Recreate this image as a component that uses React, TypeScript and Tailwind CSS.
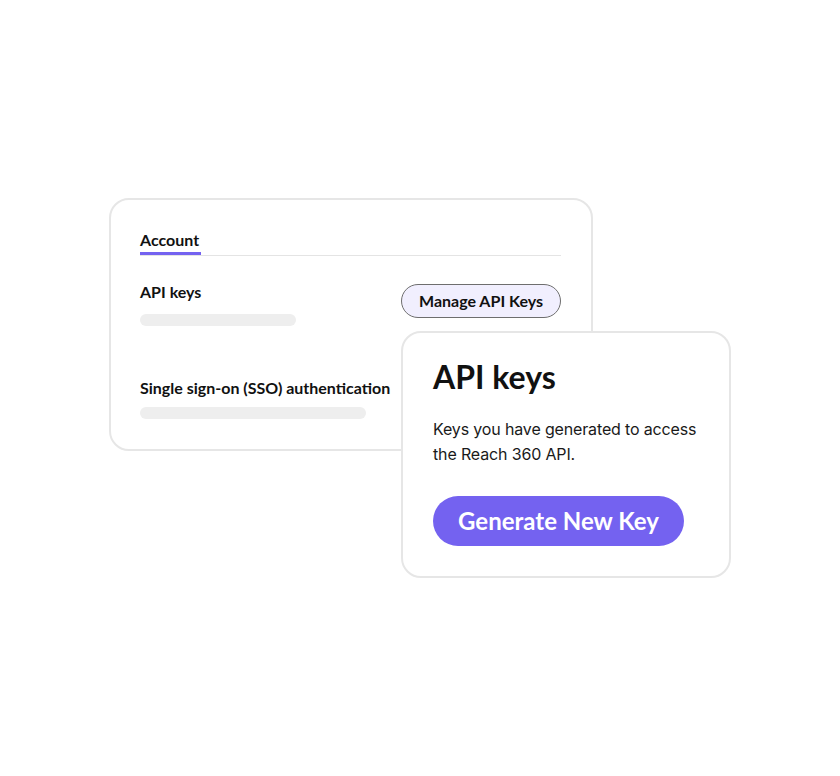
import React from "react";

export default function App() {
  return (
    <div className="w-[840px] h-[776px] bg-white relative" style={{ fontFamily: "Lato, 'Noto Sans', sans-serif" }}>
      <div className="absolute left-[109px] top-[198px] w-[484px] h-[253px] border-2 border-[#e6e6e6] rounded-[20px] bg-white pl-[29px] pr-[30px] pt-[30px] text-[#111]">
        <div className="flex border-b border-[#e4e4e4] h-[26px]">
          <span className="text-[16px] leading-[20px] font-bold border-b-[3px] border-[#7462f0] h-[25px] inline-block pr-[2px]">Account</span>
        </div>
        <div className="flex justify-between items-start mt-[26px]">
          <div className="flex flex-col">
            <span className="text-[16px] leading-[20px] font-bold">API keys</span>
            <div className="mt-[12px] w-[156px] h-[12px] rounded-full bg-[#eeeeee]" />
          </div>
          <div className="mt-[2px] w-[160px] h-[34px] rounded-full border border-[#6e6e6e] bg-[#f1effe] flex items-center justify-center text-[16px] font-bold">
            Manage API Keys
          </div>
        </div>
        <div className="flex flex-col mt-[52px]">
          <span className="text-[16px] leading-[20px] font-bold">Single sign-on (SSO) authentication</span>
          <div className="mt-[9px] w-[226px] h-[12px] rounded-full bg-[#eeeeee]" />
        </div>
      </div>
      <div className="absolute left-[401px] top-[331px] w-[330px] h-[247px] border-2 border-[#e6e6e6] rounded-[20px] bg-white pl-[30px] pt-[24px] text-[#111]">
        <h2 className="text-[32px] leading-[40px] font-bold">API keys</h2>
        <p
          className="mt-[20px] text-[16px] leading-[25px] text-[#1a1a1a] tracking-[-0.15px]"
          style={{ fontFamily: "Inter, 'Noto Sans', sans-serif" }}
        >
          Keys you have generated to access
          <br />
          the Reach 360 API.
        </p>
        <div className="mt-[29px] w-[251px] h-[50px] rounded-full bg-[#7462f0] text-white flex items-center justify-center text-[24px] font-bold">
          Generate New Key
        </div>
      </div>
    </div>
  );
}
